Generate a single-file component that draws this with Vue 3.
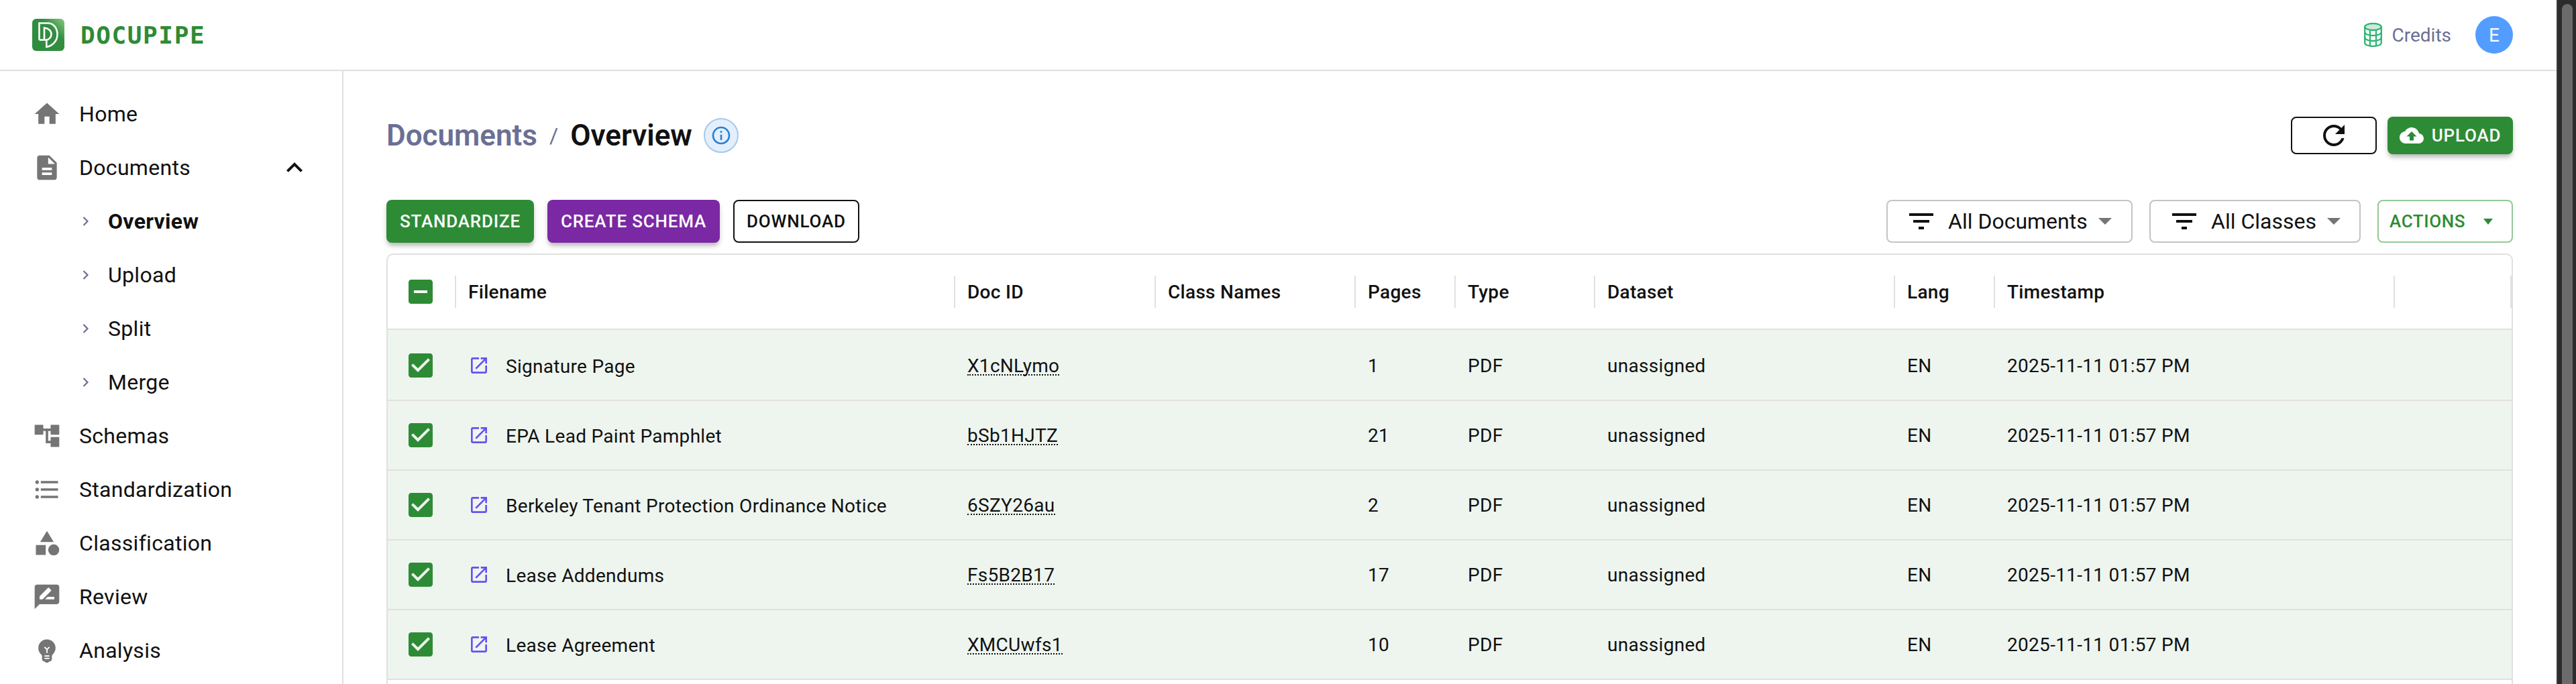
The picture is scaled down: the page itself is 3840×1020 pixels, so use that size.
<script setup>
const icons = {
  home: 'M10 20v-6h4v6h5v-8h3L12 3 2 12h3v8z',
  doc: 'M14 2H6c-1.1 0-1.99.9-1.99 2L4 20c0 1.1.89 2 1.99 2H18c1.1 0 2-.9 2-2V8l-6-6zm2 16H8v-2h8v2zm0-4H8v-2h8v2zm-3-5V3.5L18.5 9H13z',
  tree: 'M22 11V3h-7v3H9V3H2v8h7V8h2v10h4v3h7v-8h-7v3h-2V8h2v3z',
  list: 'M4 10.5c-.83 0-1.5.67-1.5 1.5s.67 1.5 1.5 1.5 1.5-.67 1.5-1.5-.67-1.5-1.5-1.5zm0-6c-.83 0-1.5.67-1.5 1.5S3.17 7.5 4 7.5 5.5 6.83 5.5 6 4.83 4.5 4 4.5zm0 12c-.83 0-1.5.68-1.5 1.5s.68 1.5 1.5 1.5 1.5-.68 1.5-1.5-.67-1.5-1.5-1.5zM7 19h14v-2H7v2zm0-6h14v-2H7v2zm0-8v2h14V5H7z',
  category: 'M12 2l-5.5 9h11zM17.5 13a4.5 4.5 0 1 0 0 9 4.5 4.5 0 0 0 0-9zM3 13.5h8v8H3z',
  review: 'M20 2H4c-1.1 0-1.99.9-1.99 2L2 22l4-4h14c1.1 0 2-.9 2-2V4c0-1.1-.9-2-2-2zM6 14v-2.47l6.88-6.88c.2-.2.51-.2.71 0l1.77 1.77c.2.2.2.51 0 .71L8.47 14H6zm12 0h-7.5l2-2H18v2z',
  bulb: 'M12 3c-.46 0-.93.04-1.4.14-2.76.53-4.96 2.76-5.48 5.52-.48 2.61.48 5.01 2.22 6.56.43.38.66.91.66 1.47V19c0 1.1.9 2 2 2h.28c.35.6.98 1 1.72 1s1.38-.4 1.72-1H14c1.1 0 2-.9 2-2v-2.31c0-.55.22-1.09.64-1.46C18.09 13.95 19 12.08 19 10c0-3.87-3.13-7-7-7zm2 16h-4v-1h4v1zm0-2h-4v-1h4v1zm-1.5-5.59V14h-1v-2.59L9.67 9.59l.71-.71L12 10.5l1.62-1.62.71.71-1.83 1.82z',
  less: 'M12 8l-6 6 1.41 1.41L12 10.83l4.59 4.58L18 14z',
  refresh: 'M17.65 6.35C16.2 4.9 14.21 4 12 4c-4.42 0-7.99 3.58-7.99 8s3.57 8 7.99 8c3.73 0 6.84-2.55 7.73-6h-2.08c-.82 2.33-3.04 4-5.65 4-3.31 0-6-2.69-6-6s2.69-6 6-6c1.66 0 3.14.69 4.22 1.78L13 11h7V4l-2.35 2.35z',
  cloud: 'M19.35 10.04C18.67 6.59 15.64 4 12 4 9.11 4 6.6 5.64 5.35 8.04 2.34 8.36 0 10.91 0 14c0 3.31 2.69 6 6 6h13c2.76 0 5-2.24 5-5 0-2.64-2.05-4.78-4.65-4.96zM14 13v4h-4v-4H7l5-5 5 5h-3z',
  filter: 'M10 18h4v-2h-4v2zM3 6v2h18V6H3zm3 7h12v-2H6v2z',
  open: 'M19 19H5V5h7V3H5c-1.11 0-2 .9-2 2v14c0 1.1.89 2 2 2h14c1.1 0 2-.9 2-2v-7h-2v7zM14 3v2h3.59l-9.83 9.83 1.41 1.41L19 6.41V10h2V3h-7z',
  info: 'M11 7h2v2h-2zm0 4h2v6h-2zm1-9C6.48 2 2 6.48 2 12s4.48 10 10 10 10-4.48 10-10S17.52 2 12 2zm0 18c-4.41 0-8-3.59-8-8s3.59-8 8-8 8 3.59 8 8-3.59 8-8 8z',
  check: 'M19 3H5c-1.11 0-2 .9-2 2v14c0 1.1.89 2 2 2h14c1.11 0 2-.9 2-2V5c0-1.1-.89-2-2-2zm-9 14l-5-5 1.41-1.41L10 14.17l7.59-7.59L19 8l-9 9z',
  minus: 'M19 3H5c-1.1 0-2 .9-2 2v14c0 1.1.9 2 2 2h14c1.1 0 2-.9 2-2V5c0-1.1-.9-2-2-2zm-2 10H7v-2h10v2z'
}
const nav = [
  { label: 'Home', icon: 'home' },
  { label: 'Documents', icon: 'doc', open: true },
  { label: 'Overview', sub: true, active: true },
  { label: 'Upload', sub: true },
  { label: 'Split', sub: true },
  { label: 'Merge', sub: true },
  { label: 'Schemas', icon: 'tree' },
  { label: 'Standardization', icon: 'list' },
  { label: 'Classification', icon: 'category' },
  { label: 'Review', icon: 'review' },
  { label: 'Analysis', icon: 'bulb' }
]
const headers = ['Filename', 'Doc ID', 'Class Names', 'Pages', 'Type', 'Dataset', 'Lang', 'Timestamp', '']
const rows = [
  { name: 'Signature Page', id: 'X1cNLymo', pages: 1 },
  { name: 'EPA Lead Paint Pamphlet', id: 'bSb1HJTZ', pages: 21 },
  { name: 'Berkeley Tenant Protection Ordinance Notice', id: '6SZY26au', pages: 2 },
  { name: 'Lease Addendums', id: 'Fs5B2B17', pages: 17 },
  { name: 'Lease Agreement', id: 'XMCUwfs1', pages: 10 }
]
</script>

<template>
  <div class="app">
    <div class="page">
      <header class="topbar">
        <div class="brand">
          <svg class="logo" viewBox="0 0 48 48">
            <defs>
              <linearGradient id="logoGrad" x1="0" y1="1" x2="1" y2="0">
                <stop offset="0" stop-color="#2e8b3d" />
                <stop offset="0.65" stop-color="#328f42" />
                <stop offset="1" stop-color="#8cc87e" />
              </linearGradient>
            </defs>
            <rect width="48" height="48" rx="6" fill="url(#logoGrad)" />
            <g fill="none" stroke="#fff" stroke-width="2.6">
              <path d="M10.5 31.5V6.5H23C32 6.5 37.5 14 37.5 23.5 37.5 33 30 41 21.3 42V31.5H10.5" />
              <path d="M18 31V13.5C24 14 28.5 18 28.5 23 28.5 27.500 25 31 21.300 31.500" />
            </g>
          </svg>
          <span class="brand-name">DOCUPIPE</span>
        </div>
        <div class="top-right">
          <svg class="credit-icon" viewBox="0 0 27 36" fill="none" stroke="#2fb573" stroke-width="2.3">
            <ellipse cx="13.500" cy="6" rx="12.300" ry="5" fill="#cfe9dc" />
            <path d="M1.200 6v24c0 2.800 5.500 5 12.300 5s12.300-2.200 12.300-5V6" />
            <path d="M1.200 14c0 2.800 5.500 5 12.300 5s12.300-2.200 12.300-5M1.200 22c0 2.800 5.500 5 12.300 5s12.300-2.200 12.300-5M9 10.500v24M18 10.500v24" />
          </svg>
          <span class="credits">Credits</span>
          <div class="avatar">E</div>
        </div>
      </header>
      <div class="body">
        <aside class="sidebar">
          <div v-for="item in nav" :key="item.label" class="nav-row" :class="{ 'nav-sub': item.sub, active: item.active }">
            <svg v-if="item.icon" class="nav-icon" viewBox="0 0 24 24"><path :d="icons[item.icon]" /></svg>
            <svg v-if="item.sub" class="nav-chevron" viewBox="0 0 10 14"><path d="M1.500 1 7.500 7 1.500 13" /></svg>
            <span class="nav-label">{{ item.label }}</span>
            <svg v-if="item.open" class="nav-caret" viewBox="0 0 24 24"><path :d="icons.less" /></svg>
          </div>
        </aside>
        <main class="main">
          <div class="title-row">
            <div class="crumbs">
              <span class="crumb-parent">Documents</span>
              <span class="crumb-sep">/</span>
              <span class="crumb-current">Overview</span>
              <span class="info-badge"><svg viewBox="0 0 24 24"><path :d="icons.info" /></svg></span>
            </div>
            <div class="title-actions">
              <button class="btn btn-outline btn-refresh"><svg viewBox="0 0 24 24"><path :d="icons.refresh" /></svg></button>
              <button class="btn btn-green btn-upload"><svg viewBox="0 0 24 24"><path :d="icons.cloud" /></svg>UPLOAD</button>
            </div>
          </div>
          <div class="toolbar">
            <div class="tool-left">
              <button class="btn btn-green btn-tool">STANDARDIZE</button>
              <button class="btn btn-purple btn-tool">CREATE SCHEMA</button>
              <button class="btn btn-outline btn-tool">DOWNLOAD</button>
            </div>
            <div class="tool-right">
              <button class="filter filter-docs">
                <svg class="filter-icon" viewBox="0 0 24 24"><path :d="icons.filter" /></svg>
                <span>All Documents</span><i class="tri"></i>
              </button>
              <button class="filter filter-classes">
                <svg class="filter-icon" viewBox="0 0 24 24"><path :d="icons.filter" /></svg>
                <span>All Classes</span><i class="tri"></i>
              </button>
              <button class="actions">ACTIONS<i class="tri tri-green"></i></button>
            </div>
          </div>
          <div class="table">
            <div class="tr thead">
              <div class="td td-check">
                <svg class="cb" viewBox="0 0 24 24"><path :d="icons.minus" /></svg>
              </div>
              <div v-for="h in headers" :key="h" class="td th"><span>{{ h }}</span></div>
            </div>
            <div v-for="r in rows" :key="r.id" class="tr row">
              <div class="td td-check">
                <svg class="cb" viewBox="0 0 24 24"><path :d="icons.check" /></svg>
              </div>
              <div class="td">
                <svg class="open" viewBox="0 0 24 24"><path :d="icons.open" /></svg>
                <span class="fname">{{ r.name }}</span>
              </div>
              <div class="td"><span class="docid">{{ r.id }}</span></div>
              <div class="td"></div>
              <div class="td">{{ r.pages }}</div>
              <div class="td">PDF</div>
              <div class="td">unassigned</div>
              <div class="td">EN</div>
              <div class="td">2025-11-11 01:57 PM</div>
              <div class="td"></div>
            </div>
          </div>
        </main>
      </div>
    </div>
    <div class="scrollbar"><div class="thumb"></div></div>
  </div>
</template>

<style>
html, body { margin: 0; background: #fff; overflow: hidden; }
</style>

<style scoped>
.app {
  display: flex;
  width: 3840px;
  height: 1020px;
  overflow: hidden;
  font-family: Roboto, "Liberation Sans", sans-serif;
  color: #111;
  background: #fff;
}
.page { width: 3811px; flex: none; display: flex; flex-direction: column; }
.scrollbar {
  flex: 1;
  background: #2c2c2c;
  border-left: 2px solid #3c3c3c;
  padding: 6px 5px 0 6px;
  box-sizing: border-box;
}
.thumb { height: 1100px; background: #6b6b6b; border-radius: 8px; }

.topbar {
  height: 106px;
  box-sizing: border-box;
  flex: none;
  border-bottom: 2px solid #e0e0e0;
  display: flex;
  align-items: center;
  justify-content: space-between;
  padding: 0 65px 0 48px;
}
.brand { display: flex; align-items: center; gap: 24px; }
.logo { width: 48px; height: 48px; }
.brand-name {
  font-family: "DejaVu Sans Mono", monospace;
  font-weight: 700;
  font-size: 36px;
  letter-spacing: 1.6px;
  color: #2e8b35;
}
.top-right { display: flex; align-items: center; }
.credit-icon { width: 27px; height: 36px; margin-right: 14px; }
.credits { font-size: 28px; color: #6b6f94; margin-right: 36px; }
.avatar {
  width: 56px;
  height: 56px;
  border-radius: 50%;
  background: #529dff;
  color: #fff;
  font-size: 28px;
  display: flex;
  align-items: center;
  justify-content: center;
}

.body { flex: 1; display: flex; min-height: 0; }
.sidebar {
  width: 512px;
  box-sizing: border-box;
  flex: none;
  border-right: 2px solid #e0e0e0;
  padding: 24px 0 0 48px;
}
.nav-row { height: 80px; display: flex; align-items: center; font-size: 32px; letter-spacing: 0.3px; }
.nav-icon { width: 44px; height: 44px; margin-right: 26px; fill: #757575; flex: none; }
.nav-caret { width: 48px; height: 48px; fill: #111; margin-left: auto; margin-right: 47px; }
.nav-sub { padding-left: 75px; }
.nav-chevron { width: 10px; height: 14px; fill: none; stroke: #6b6f94; stroke-width: 2.200; margin-right: 28px; flex: none; }
.active .nav-label { font-weight: 700; }

.main { flex: 1; min-width: 0; padding: 68px 65px 0 64px; }
.title-row { display: flex; align-items: center; justify-content: space-between; height: 56px; }
.crumbs { display: flex; align-items: center; font-size: 44px; font-weight: 600; }
.crumb-parent { color: #6b6f94; }
.crumb-sep { color: #6b6f94; font-weight: 400; font-size: 32px; margin: 0 18px; }
.info-badge {
  width: 52px;
  height: 52px;
  box-sizing: border-box;
  border-radius: 50%;
  margin-left: 17px;
  background: #e3effb;
  border: 2px solid #a3caf0;
  display: flex;
  align-items: center;
  justify-content: center;
}
.info-badge svg { width: 32px; height: 32px; fill: #2a7fd6; }
.title-actions { display: flex; gap: 16px; }

.btn {
  font-family: inherit;
  font-size: 26px;
  font-weight: 500;
  letter-spacing: 0.8px;
  border-radius: 8px;
  border: 0;
  box-sizing: border-box;
  display: flex;
  align-items: center;
  justify-content: center;
  padding: 0 20px;
}
.btn-green { background: #2e8b35; color: #fff; box-shadow: 0 6px 6px -2px rgba(0,0,0,.2), 0 4px 10px rgba(0,0,0,.12); }
.btn-purple { background: #7b28a4; color: #fff; box-shadow: 0 6px 6px -2px rgba(0,0,0,.2), 0 4px 10px rgba(0,0,0,.12); }
.btn-outline { background: #fff; color: #111; border: 2px solid #111; padding: 0 18px; }
.btn-refresh { width: 128px; height: 56px; }
.btn-refresh svg { width: 48px; height: 48px; fill: #111; }
.btn-upload { width: 187px; height: 56px; padding: 0; gap: 12px; }
.btn-upload svg { width: 36px; height: 36px; fill: #fff; }

.toolbar { display: flex; justify-content: space-between; margin-top: 68px; height: 64px; }
.tool-left { display: flex; gap: 20px; }
.tool-right { display: flex; gap: 25px; }
.btn-tool { height: 64px; }
.filter {
  height: 64px;
  box-sizing: border-box;
  background: #fff;
  border: 2px solid #c4c4c4;
  border-radius: 8px;
  font-family: inherit;
  font-size: 32px;
  color: #111;
  display: flex;
  align-items: center;
  padding: 0 26px;
}
.filter-docs { width: 367px; }
.filter-classes { width: 315px; }
.filter-icon { width: 48px; height: 48px; fill: #111; margin-right: 16px; flex: none; }
.tri {
  width: 0;
  height: 0;
  border-left: 10px solid transparent;
  border-right: 10px solid transparent;
  border-top: 10px solid #757575;
  margin-left: 16px;
}
.actions {
  width: 202px;
  height: 64px;
  box-sizing: border-box;
  background: #fff;
  border: 2px solid #95c79a;
  border-radius: 8px;
  font-family: inherit;
  font-size: 26px;
  font-weight: 500;
  letter-spacing: 0.6px;
  color: #2e8b35;
  display: flex;
  align-items: center;
  padding: 0 16px;
}
.tri-green { border-left-width: 7px; border-right-width: 7px; border-top: 9px solid #2e8b35; margin-left: 27px; }

.table {
  margin-top: 16px;
  border: 2px solid #e0e0e0;
  border-bottom: 0;
  border-radius: 10px 10px 0 0;
  height: 800px;
  box-sizing: border-box;
}
.tr {
  display: grid;
  grid-template-columns: 102px 744px 299px 298px 149px 208px 447px 149px 596px 1fr;
}
.thead { height: 110px; border-bottom: 2px solid #e0e0e0; }
.row { height: 102px; border-bottom: 2px solid #e0e0e0; background: #eef5ef; }
.thead + .row { padding-top: 2px; }
.td {
  display: flex;
  align-items: center;
  font-size: 28px;
  letter-spacing: 0.3px;
  padding: 0 18px;
  min-width: 0;
  white-space: nowrap;
}
.td-check { padding: 0 0 0 25px; position: relative; }
.th { font-weight: 500; position: relative; }
.thead .td-check::after, .th::after {
  content: "";
  position: absolute;
  right: 0;
  top: 31px;
  height: 48px;
  width: 2px;
  background: #e0e0e0;
}
.cb { width: 48px; height: 48px; fill: #2e8b35; flex: none; }
.open { width: 32px; height: 32px; fill: #6b4ff0; margin-right: 24px; flex: none; }
.fname { padding-top: 3px; }
.docid { border-bottom: 2px dotted #111; line-height: 25px; padding-top: 2px; }
</style>
